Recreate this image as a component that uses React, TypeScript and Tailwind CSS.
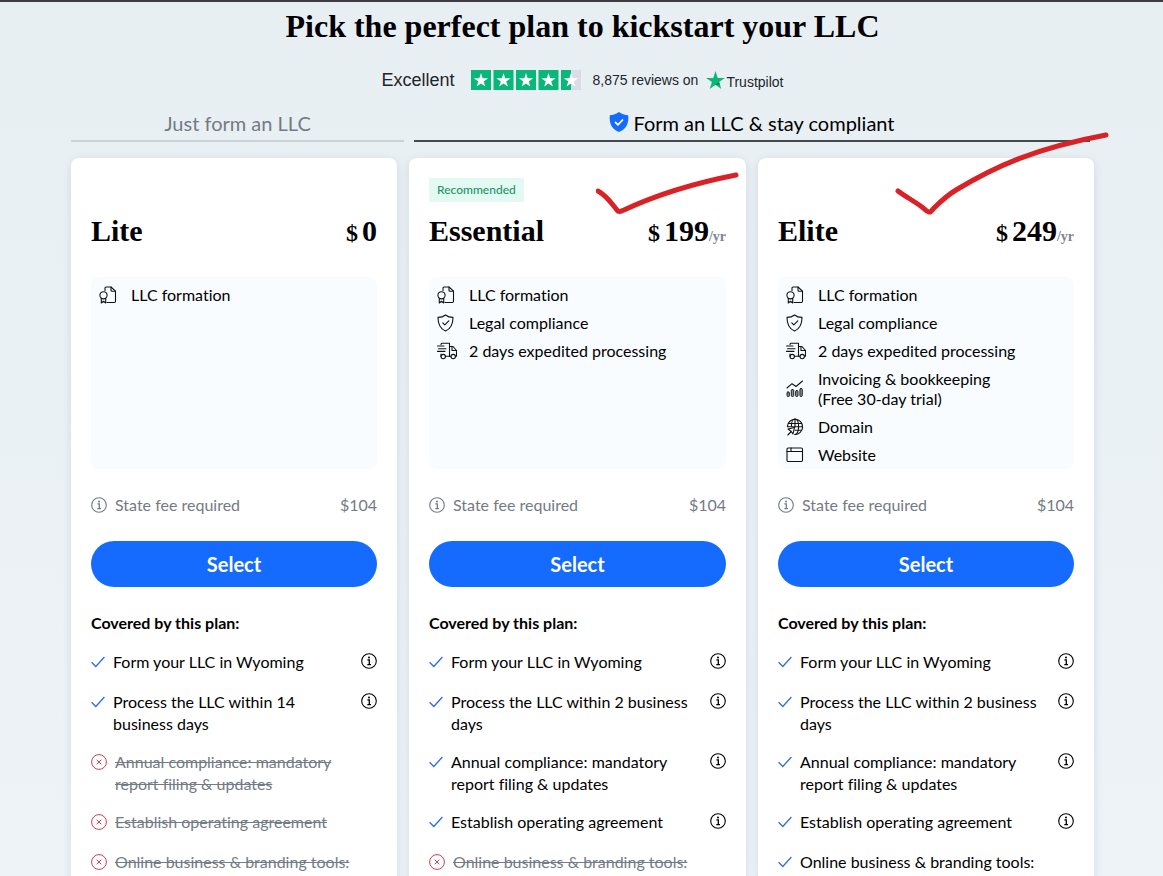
import type { ReactNode } from "react";

type Feature = { icon: IconName; label: string; note?: string };
type CoveredItem = { text: string; included: boolean };
type Plan = {
    name: string;
    price: string;
    yearly: boolean;
    recommended?: boolean;
    features: Feature[];
    covered: CoveredItem[];
    mark?: ReactNode;
};

type IconName = "formation" | "shield" | "truck" | "chart" | "globe" | "browser";

const icons: Record<IconName, ReactNode> = {
    formation: (
        <>
            <path d="M6 4.5V2.2Q6 1 7.2 1H12L16.5 5.2V15.3Q16.5 16.5 15.3 16.5H8" />
            <path d="M12 1V4.2Q12 5.2 13 5.2H16.5" />
            <circle cx="4.5" cy="9.3" r="3.6" />
            <path d="M2.3 12.3V17L4.5 15.3L6.7 17V12.3" />
        </>
    ),
    shield: (
        <>
            <path d="M8.5 1C6.6 2.6 4.2 3.4 1 3.4C1 9.8 3 14.5 8.5 17C14 14.5 16 9.8 16 3.4C13 3.4 10.5 2.6 8.5 1Z" />
            <path d="M5.8 8.8L7.8 10.9L11.8 6.8" />
        </>
    ),
    truck: (
        <>
            <path d="M4 2.5V2.2Q4 1.2 5 1.2H12.5V14.2H8.5" />
            <path d="M12.5 4.5H16L19.5 8.5V14.2H18.5M13.8 14.2H12.5M4 12V14.2" />
            <path d="M15 4.5V8.5H19.5" />
            <path d="M0.5 4H7M1.5 6.7H9M0.5 9.4H8" />
            <circle cx="6.2" cy="14.6" r="2.2" />
            <circle cx="16.2" cy="14.6" r="2.2" />
        </>
    ),
    chart: (
        <>
            <path d="M1 8L6 3.7L10 6.5L16.5 1" />
            <g fill="#8b9095" strokeWidth="0.9">
                <rect x="1" y="12" width="2.4" height="4.5" rx="1" />
                <rect x="5.3" y="9.5" width="2.4" height="7" rx="1" />
                <rect x="9.6" y="10.5" width="2.4" height="6" rx="1" />
                <rect x="13.9" y="8.500" width="2.400" height="8" rx="1" />
            </g>
        </>
    ),
    globe: (
        <>
            <path d="M1.4 8.5A7.6 7.6 0 1 1 8.8 16.5" />
            <path d="M5.4 8C5.4 4 7 1 9 1C11 1 12.6 4 12.6 8.7C12.6 13 11 16.5 9 16.5" />
            <path d="M2.5 5.5H15.5M1.5 8.8H16.5M9 12.3H15.5M9 1V9" />
            <path d="M2 11L8.5 9.5L7 16L5.3 13.5L1.8 17M2 11L5.3 13.5" />
        </>
    ),
    browser: (
        <>
            <rect x="1" y="2" width="15.5" height="13.5" rx="1.2" />
            <path d="M1 5.5H16.5M5 2V5.5" />
        </>
    ),
};

function FeatureIcon({ name }: { name: IconName }) {
    return (
        <svg
            viewBox="0 0 20 18"
            className="h-[18px] w-5 shrink-0"
            fill="none"
            stroke="#111"
            strokeWidth="1.1"
            strokeLinejoin="round"
            strokeLinecap="round"
            aria-hidden="true"
        >
            {icons[name]}
        </svg>
    );
}

function InfoIcon() {
    return (
        <svg viewBox="0 0 16 16" className="size-4 shrink-0" fill="none" stroke="currentColor" aria-hidden="true">
            <circle cx="8" cy="8" r="7.3" strokeWidth="1.1" />
            <path d="M6.4 6.8H8.3V11.6M6.3 11.7H10" strokeWidth="1.3" />
            <circle cx="8" cy="4.4" r="1" fill="currentColor" stroke="none" />
        </svg>
    );
}

function CheckIcon() {
    return (
        <svg viewBox="0 0 14 12" className="mt-[5px] h-3 w-[14px] shrink-0" fill="none" stroke="#2f6fd6" strokeWidth="1.3" aria-hidden="true">
            <path d="M0.6 6.3L4.8 10.5L13.4 1" />
        </svg>
    );
}

function ExcludedIcon() {
    return (
        <svg viewBox="0 0 16 16" className="mt-[3px] size-4 shrink-0" fill="none" stroke="#cb3f52" aria-hidden="true">
            <circle cx="8" cy="8" r="7.4" />
            <path d="M5.7 5.7L10.3 10.3M10.3 5.7L5.7 10.3" />
        </svg>
    );
}

const STAR = "M10 3L11.7 8.2H17.1L12.7 11.4L14.4 16.6L10 13.4L5.6 16.6L7.3 11.4L2.9 8.2H8.3Z";

function RatingStars() {
    return (
        <svg viewBox="0 0 110 20" className="h-5 w-[110px]" role="img" aria-label="4.5 out of 5 stars">
            {[0, 1, 2, 3, 4].map((i) => (
                <g key={i} transform={`translate(${i * 22.5} 0)`}>
                    <rect width="20" height="20" fill={i === 4 ? "#dcdce6" : "#0bb67b"} />
                    {i === 4 && <rect width="10" height="20" fill="#0bb67b" />}
                    <path d={STAR} fill="#fff" />
                </g>
            ))}
        </svg>
    );
}

const baseFeatures: Feature[] = [
    { icon: "formation", label: "LLC formation" },
    { icon: "shield", label: "Legal compliance" },
    { icon: "truck", label: "2 days expedited processing" },
];

const plans: Plan[] = [
    {
        name: "Lite",
        price: "0",
        yearly: false,
        features: baseFeatures.slice(0, 1),
        covered: [
            { text: "Form your LLC in Wyoming", included: true },
            { text: "Process the LLC within 14 business days", included: true },
            { text: "Annual compliance: mandatory report filing & updates", included: false },
            { text: "Establish operating agreement", included: false },
            { text: "Online business & branding tools:", included: false },
        ],
    },
    {
        name: "Essential",
        price: "199",
        yearly: true,
        recommended: true,
        features: baseFeatures,
        covered: [
            { text: "Form your LLC in Wyoming", included: true },
            { text: "Process the LLC within 2 business days", included: true },
            { text: "Annual compliance: mandatory report filing & updates", included: true },
            { text: "Establish operating agreement", included: true },
            { text: "Online business & branding tools:", included: false },
        ],
        mark: (
            <svg viewBox="0 0 146 44" className="pointer-events-none absolute top-3 right-1 h-11 w-[146px]" fill="none" aria-hidden="true">
                <path
                    d="M2 21C11 26 16 34 21 40C23 43 25 41 28 40C60 25 94 14 140 5"
                    stroke="#d92226"
                    strokeWidth="5"
                    strokeLinecap="round"
                    strokeLinejoin="round"
                />
            </svg>
        ),
    },
    {
        name: "Elite",
        price: "249",
        yearly: true,
        features: [
            ...baseFeatures,
            { icon: "chart", label: "Invoicing & bookkeeping", note: "(Free 30-day trial)" },
            { icon: "globe", label: "Domain" },
            { icon: "browser", label: "Website" },
        ],
        covered: [
            { text: "Form your LLC in Wyoming", included: true },
            { text: "Process the LLC within 2 business days", included: true },
            { text: "Annual compliance: mandatory report filing & updates", included: true },
            { text: "Establish operating agreement", included: true },
            { text: "Online business & branding tools:", included: true },
        ],
        mark: (
            <svg viewBox="0 0 216 88" className="pointer-events-none absolute -top-7 -right-4 h-[88px] w-[216px]" fill="none" aria-hidden="true">
                <path
                    d="M4 61C12 67 20 71 28 77C33 81 35 85 39 79C46 72 52 66 62 60C102 36 142 18 212 5"
                    stroke="#d92226"
                    strokeWidth="5"
                    strokeLinecap="round"
                    strokeLinejoin="round"
                />
            </svg>
        ),
    },
];

function PlanCard({ plan }: { plan: Plan }) {
    return (
        <section className="relative rounded-lg bg-white p-5 shadow-[0_2px_8px_rgba(60,90,110,0.14)]">
            <div className="h-6">
                {plan.recommended && (
                    <span className="flex h-6 w-fit items-center bg-[#e3faf2] px-2 text-xs font-medium text-[#1f9467]">
                        Recommended
                    </span>
                )}
            </div>
            {plan.mark}

            <div className="mt-[11px] flex h-9 items-baseline justify-between font-['Liberation_Serif',serif] font-bold">
                <h2 className="text-[30px] leading-9">{plan.name}</h2>
                <p className="flex items-baseline leading-9">
                    <span className="mr-1 text-2xl leading-9">$</span>
                    <span className="text-[30px]">{plan.price}</span>
                    {plan.yearly && <span className="text-sm text-[#7d858f]">/yr</span>}
                </p>
            </div>

            <ul className="mt-7 flex h-48 flex-col gap-2 rounded-lg bg-[#f8fcff] px-2 pt-2">
                {plan.features.map((feature) => (
                    <li key={feature.label} className="flex items-center gap-3 leading-5">
                        <FeatureIcon name={feature.icon} />
                        <span>
                            {feature.label}
                            {feature.note && <span className="block">{feature.note}</span>}
                        </span>
                    </li>
                ))}
            </ul>

            <div className="mt-6 flex h-6 items-center gap-2 text-[#737b84]">
                <InfoIcon />
                <span>State fee required</span>
                <span className="ml-auto">$104</span>
            </div>

            <button
                type="button"
                className="mt-6 h-[46px] w-full cursor-pointer rounded-full bg-[#166bff] text-xl font-bold text-white hover:brightness-90"
            >
                Select
            </button>

            <h3 className="mt-6 leading-6 font-bold">Covered by this plan:</h3>
            <ul className="mt-4 flex flex-col gap-4">
                {plan.covered.map((item) => (
                    <li key={item.text} className="flex min-h-6 items-start gap-2 leading-[22px]">
                        {item.included ? <CheckIcon /> : <ExcludedIcon />}
                        <span className={item.included ? "flex-1" : "flex-1 text-[#737b84] line-through"}>{item.text}</span>
                        {item.included && !item.text.endsWith(":") ? (
                            <button type="button" className="mt-0.5 cursor-pointer" aria-label={`About ${item.text}`}>
                                <InfoIcon />
                            </button>
                        ) : (
                            <span className="w-4" />
                        )}
                    </li>
                ))}
            </ul>
        </section>
    );
}

export default function App() {
    return (
        <main className="h-screen overflow-hidden border-t-2 border-[#3f3d42] bg-linear-to-b from-[#e8eff3] to-[#edf3f7] pr-4 pl-[18px] font-['Lato',sans-serif] text-base text-black [font-variant-ligatures:none]">
            <div className="mx-auto max-w-[1023px]">
                <h1 className="pt-1 text-center font-['Liberation_Serif',serif] text-[32px] leading-10 font-bold">
                    Pick the perfect plan to kickstart your LLC
                </h1>

                <div className="mt-[22px] flex h-6 items-center justify-center font-['Liberation_Sans',sans-serif] text-[#22252b]">
                    <span className="mr-4 text-lg">Excellent</span>
                    <RatingStars />
                    <span className="mr-2 ml-3 text-sm">8,875 reviews on</span>
                    <svg viewBox="2.9 3 14.2 13.6" className="mr-px h-[18px] w-[19px]" aria-hidden="true">
                        <path d={STAR} fill="#0bb67b" />
                        <path d="M12.7 11.4L13.3 13.2L10 13.4Z" fill="#08784f" />
                    </svg>
                    <span className="pt-1 text-sm font-medium">Trustpilot</span>
                </div>

                <div className="mt-[14px] grid grid-cols-[333fr_680fr] gap-[10px] text-center text-xl">
                    <div className="flex h-9 items-center justify-center border-b-2 border-[#cbd3da] text-[#737b84]">
                        Just form an LLC
                    </div>
                    <div className="mr-1 flex h-9 items-center justify-center gap-1 border-b-2 border-[#454a4d]">
                        <svg viewBox="0 0 20 20" className="mb-0.5 size-5" aria-hidden="true">
                            <path d="M10 0C12.5 2 16 3 19.2 3.2C20 11 17.5 17 10 20C2.5 17 0 11 0.8 3.2C4 3 7.5 2 10 0Z" fill="#166bff" />
                            <path d="M6 10L9 12.8L14 7.5" fill="none" stroke="#fff" strokeWidth="1.8" />
                        </svg>
                        Form an LLC &amp; stay compliant
                    </div>
                </div>

                <div className="mt-4 grid grid-cols-[326fr_337fr_336fr] gap-3">
                    {plans.map((plan) => (
                        <PlanCard key={plan.name} plan={plan} />
                    ))}
                </div>
            </div>
        </main>
    );
}
